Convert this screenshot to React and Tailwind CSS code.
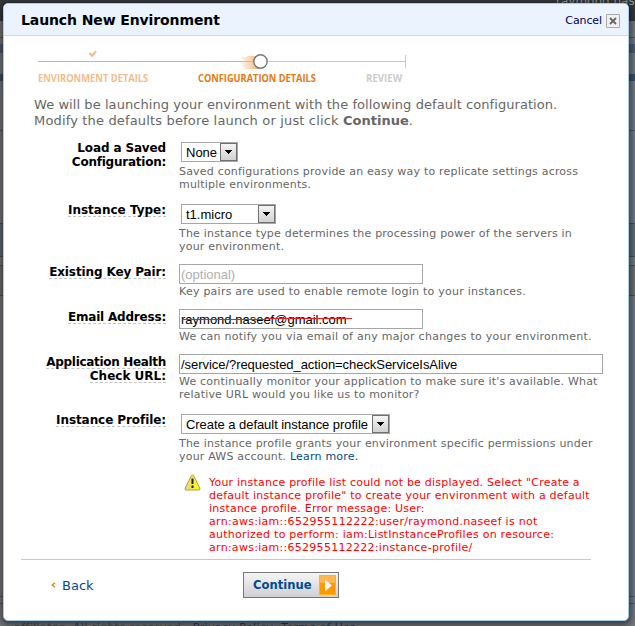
import React from 'react';

function Line({ children, className = '' }) {
  return <div className={'whitespace-nowrap ' + className}>{children}</div>;
}

function Label({ lines, plain }) {
  return (
    <div className="w-[166px] shrink-0 text-right text-[12px] font-bold leading-[14px] text-black">
      {lines.map((l) => (
        <div key={l.text} className="flex h-[14px] justify-end">
          <span className={'block h-[14px] whitespace-nowrap leading-[14px] ' + l.cls + (plain ? '' : ' border-b border-dashed border-[#c4c4c4]')}>{l.text}</span>
        </div>
      ))}
    </div>
  );
}

function Select({ children, className }) {
  return (
    <div className={'ml-[2px] flex h-[20px] items-stretch border border-[#a5a5aa] bg-white font-["Liberation_Sans",sans-serif] text-[13px] text-black ' + className}>
      <span className="flex-1 whitespace-nowrap pl-[4px] leading-[19px]">{children}</span>
      <span className="flex w-[17px] items-center justify-center border border-[#707070] bg-linear-to-b from-[#f4f4f4] to-[#d2d2d2]">
        <svg width="7" height="4" viewBox="0 0 7 4" shapeRendering="crispEdges"><path d="M0 0h7v1h-1v1h-1v1h-1v1h-1v-1h-1v-1h-1v-1h-1z" fill="#000" /></svg>
      </span>
    </div>
  );
}

function Input({ children, className }) {
  return (
    <div className={'relative h-[20px] whitespace-nowrap border border-[#a5a5aa] bg-white pl-px font-["Liberation_Sans",sans-serif] text-[13px] leading-[20px] ' + className}>{children}</div>
  );
}

function Row({ label, plain, className, children }) {
  return (
    <div className={'flex ' + className}>
      <Label lines={label} plain={plain} />
      <div className="ml-[13px] text-[11px] leading-[13px] tracking-[0.2px] text-[#666]">{children}</div>
    </div>
  );
}

export default function App() {
  return (
    <div className='relative h-[626px] w-[635px] overflow-hidden bg-[#74777b] pl-[3px] pt-[3px] font-["DejaVu_Sans",sans-serif]'>
      <div className="absolute inset-0 flex flex-col">
        <div className="h-[21px] bg-[#34383c]"></div>
        <div className="h-[17px] border-b border-[#55585c] bg-[#74777b]"></div>
        <div className="h-[6px]"></div>
        <div className="h-[9px] bg-[#4f5b6b]"></div>
        <div className="h-[21px]"></div>
        <div className="h-[7px] bg-[#3e4e68]"></div>
        <div className="h-[50px] border-b border-[#55585c]"></div>
        <div className="h-[92px]"></div>
        <div className="h-[34px] border-y border-[#4b5158] bg-[#646b74]"></div>
        <div className="h-[8px]"></div>
        <div className="h-[31px] border-y border-[#67483a] bg-[#6f706c]"></div>
        <div className="h-[300px]"></div>
        <div className="h-[8px] border-y border-[#55585c]"></div>
      </div>
      <div className="absolute left-[556px] top-[-6px] text-[12px] leading-[14px] text-[#949a9f]">raymond.nas</div>
      <div className="absolute left-[14px] top-[621px] whitespace-nowrap text-[11px] leading-[13px] tracking-[0.4px] text-[#44474b]">affiliates. All rights reserved. &nbsp;<span className="text-[#2d3c55]">Privacy Policy</span> &nbsp;<span className="text-[#2d3c55]">Terms of Use</span></div>

      <div className="relative h-[618px] w-[626px] overflow-hidden rounded-[5px] border border-[#a5cfe8] bg-white shadow-[0_2px_6px_2px_rgba(0,0,0,0.5)]">
        <header className="flex h-[32px] items-center border-b border-[#c6ddf0] bg-[#eaf3fe] pl-[17px] pr-[8px]">
          <h1 className="flex-1 whitespace-nowrap pt-[2px] text-[14px] font-bold tracking-[-0.11px] text-black">Launch New Environment</h1>
          <span className="pt-[3px] text-[11px] tracking-[-0.1px] text-[#000066]">Cancel</span>
          <span className="ml-[4px] mt-[2px] flex h-[14px] w-[14px] items-center justify-center rounded-[1px] border border-[#aaa] bg-[#f0f0f0]">
            <svg width="8" height="8" viewBox="0 0 8 8"><path d="M1 1l6 6M7 1l-6 6" stroke="#666" strokeWidth="1.800" /></svg>
          </span>
        </header>

        <svg className="ml-[34px] mt-[14px] block" width="369" height="22" viewBox="38 50 369 22">
          <defs><linearGradient id="trail" gradientUnits="userSpaceOnUse" x1="240" x2="258" y1="0" y2="0"><stop offset="0" stopColor="#f5c08a" stopOpacity=".1" /><stop offset="1" stopColor="#f3b47a" /></linearGradient></defs>
          <path d="M38 61.5H255" stroke="#eda873" />
          <path d="M260 61.5H405.5M405.5 55v13" stroke="#c8c8c8" fill="none" />
          <path d="M89.500 53l2.500 2.700 4-4.200" stroke="#edbd90" strokeWidth="2.300" fill="none" />
          <path d="M244 54h15v2h-12v1h-6v3h3v2h-4v2h3v1h-2v2h4v2h14V54z" fill="url(#trail)" />
          <circle cx="260.500" cy="61.500" r="6.700" fill="#fff" stroke="#777" strokeWidth="1.400" />
        </svg>
        <div className='flex h-[12px] pl-[34px] font-["Open_Sans",sans-serif] text-[11px] font-bold leading-[11px]'>
          <div className="w-[160px]"><span className="block origin-left scale-x-[.85] whitespace-nowrap text-[#f2bd8c]">ENVIRONMENT DETAILS</span></div>
          <div className="w-[168px]"><span className="block origin-left scale-x-[.84] whitespace-nowrap text-[#e47911]">CONFIGURATION DETAILS</span></div>
          <span className="block origin-left scale-x-[.88] text-[#ccc]">REVIEW</span>
        </div>

        <div className="mt-[13px] pl-[30px] text-[13px] leading-[16px] text-[#666]">
          <Line className="tracking-[0.065px]">We will be launching your environment with the following default configuration.</Line>
          <Line className="tracking-[0.16px]">Modify the defaults before launch or just click <b className="tracking-normal">Continue</b>.</Line>
        </div>

        <div className="-ml-[4px] mt-[12px]">
          <Row className="h-[62px]" plain label={[{ text: 'Load a Saved', cls: 'tracking-[-0.14px]' }, { text: 'Configuration:', cls: 'tracking-[-0.24px]' }]}>
            <Select className="mb-[3px] mt-px w-[57px] tracking-normal">None</Select>
            <Line>Saved configurations provide an easy way to replicate settings across</Line>
            <Line>multiple environments.</Line>
          </Row>
          <Row className="h-[62px]" label={[{ text: 'Instance Type:', cls: '' }]}>
            <Select className="mb-[3px] mt-px w-[95px] tracking-normal">t1.micro</Select>
            <Line>The instance type determines the processing power of the servers in</Line>
            <Line>your environment.</Line>
          </Row>
          <Row className="h-[45px]" label={[{ text: 'Existing Key Pair:', cls: 'tracking-[-0.12px]' }]}>
            <Input className="mb-px mt-[-1px] w-[244px] tracking-normal text-[#b0b0b0]">(optional)</Input>
            <Line className="tracking-[0.24px]">Key pairs are used to enable remote login to your instances.</Line>
          </Row>
          <Row className="h-[45px]" label={[{ text: 'Email Address:', cls: 'tracking-[-0.2px]' }]}>
            <Input className="mb-px mt-[-1px] w-[244px] tracking-normal text-black">raymond.naseef@gmail.com
              <svg className="absolute left-[2px] top-[8px]" width="170" height="3" viewBox="0 0 170 3" shapeRendering="crispEdges"><path d="M0 1h84v1H0zM84 0h86v1H84z" fill="#ed1c24" /></svg>
            </Input>
            <Line className="tracking-[0.26px]">We can notify you via email of any major changes to your environment.</Line>
          </Row>
          <Row className="h-[58px]" label={[{ text: 'Application Health', cls: 'tracking-[-0.32px]' }, { text: 'Check URL:', cls: '' }]}>
            <Input className="mb-px mt-[-1px] w-[424px] tracking-[-0.05px] text-black">/service/?requested_action=checkServiceIsAlive</Input>
            <Line>We continually monitor your application to make sure it's available. What</Line>
            <Line>relative URL would you like us to monitor?</Line>
          </Row>
          <Row className="h-[62px]" label={[{ text: 'Instance Profile:', cls: 'tracking-[-0.08px]' }]}>
            <Select className="mb-[3px] mt-px w-[209px] tracking-[-0.05px]">Create a default instance profile</Select>
            <Line>The instance profile grants your environment specific permissions under</Line>
            <Line>your AWS account. <span className="text-[#004b91]">Learn more.</span></Line>
          </Row>
        </div>

        <div className="flex h-[84px] pl-[180px]">
          <svg className="mt-[-1px]" width="17" height="17" viewBox="0 0 17 17"><defs><linearGradient id="w"><stop offset="0" stopColor="#e8d48a" /><stop offset="1" stopColor="#ffff00" /></linearGradient></defs><path d="M8.500 1Q9.300 1 9.800 2L15.800 14Q16.500 16 15 16H2Q.5 16 1.200 14L7.200 2Q7.700 1 8.500 1z" fill="url(#w)" stroke="#b99a4a" /><path d="M8.500 4.500v5.500M8.500 11.500v2.500" stroke="#222" strokeWidth="2" /></svg>
          <div className="ml-[8px] pt-px text-[11px] leading-[13px] tracking-[0.22px] text-[#f00]">
            <Line>Your instance profile list could not be displayed. Select "Create a</Line>
            <Line>default instance profile" to create your environment with a default</Line>
            <Line>instance profile. Error message: User:</Line>
            <Line className="tracking-[0.29px]">arn:aws:iam::652955112222:user/raymond.naseef is not</Line>
            <Line className="tracking-[0.25px]">authorized to perform: iam:ListInstanceProfiles on resource:</Line>
            <Line className="tracking-[0.28px]">arn:aws:iam::652955112222:instance-profile/</Line>
          </div>
        </div>

        <footer className="ml-[17px] flex h-[50px] w-[570px] border-t border-[#c8c8c8] text-[13px] text-[#004b91]">
          <div className="flex w-[222px] items-center gap-[6px] pl-[30px]">
            <svg width="5" height="6" viewBox="0 0 5 6"><path d="M4 .8L1.200 3 4 5.200" stroke="#e47911" fill="none" strokeWidth="1.200" /></svg>
            <span className="pt-[3px]">Back</span>
          </div>
          <button className="mt-[12px] flex h-[26px] w-[96px] items-center border border-[#777] bg-linear-to-b from-[#f5f5f5] to-[#d0d0d4] pl-[9px] pr-[2px] font-bold">
            <span className="w-[66px] origin-left scale-x-[.89] text-left">Continue</span>
            <svg className="shrink-0" width="17" height="20" viewBox="0 0 17 20"><path fill="#ffb84d" d="M0 0h17v20H0z" /><path fill="#ff9900" d="M0 8h17v12H0z" /><path d="M.5.5h16v19H.5z" fill="none" stroke="#ffb31a" /><path d="M6 4.500l7 6-7 6z" fill="#f5f5f5" /></svg>
          </button>
        </footer>
      </div>
    </div>
  );
}
